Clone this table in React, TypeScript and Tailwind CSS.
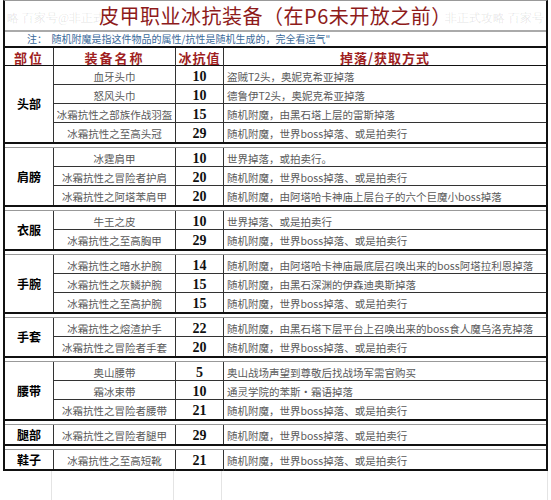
type Row = [string, string, string];
type Group = { part: string; rows: Row[] };

const groups: Group[] = [
  {
    part: "头部",
    rows: [
      ["血牙头巾", "10", "盗贼T2头，奥妮克希亚掉落"],
      ["怒风头巾", "10", "德鲁伊T2头，奥妮克希亚掉落"],
      ["冰霜抗性之部族作战羽盔", "15", "随机附魔，由黑石塔上层的雷斯掉落"],
      ["冰霜抗性之至高头冠", "29", "随机附魔，世界boss掉落、或是拍卖行"],
    ],
  },
  {
    part: "肩膀",
    rows: [
      ["冰霆肩甲", "10", "世界掉落，或拍卖行。"],
      ["冰霜抗性之冒险者护肩", "20", "随机附魔，世界boss掉落、或是拍卖行"],
      ["冰霜抗性之阿塔苯肩甲", "20", "随机附魔，由阿塔哈卡神庙上层台子的六个巨魔小boss掉落"],
    ],
  },
  {
    part: "衣服",
    rows: [
      ["牛王之皮", "10", "世界掉落、或是拍卖行"],
      ["冰霜抗性之至高胸甲", "29", "随机附魔，世界boss掉落、或是拍卖行"],
    ],
  },
  {
    part: "手腕",
    rows: [
      ["冰霜抗性之暗水护腕", "14", "随机附魔，由阿塔哈卡神庙最底层召唤出来的boss阿塔拉利恩掉落"],
      ["冰霜抗性之灰鳞护腕", "15", "随机附魔，由黑石深渊的伊森迪奥斯掉落"],
      ["冰霜抗性之至高护腕", "15", "随机附魔，世界boss掉落、或是拍卖行"],
    ],
  },
  {
    part: "手套",
    rows: [
      ["冰霜抗性之熔渣护手", "22", "随机附魔，由黑石塔下层平台上召唤出来的boss食人魔乌洛克掉落"],
      ["冰霜抗性之冒险者手套", "20", "随机附魔，世界boss掉落、或是拍卖行"],
    ],
  },
  {
    part: "腰带",
    rows: [
      ["奥山腰带", "5", "奥山战场声望到尊敬后找战场军需官购买"],
      ["霜冰束带", "10", "通灵学院的苯斯·霜语掉落"],
      ["冰霜抗性之冒险者腰带", "21", "随机附魔，世界boss掉落、或是拍卖行"],
    ],
  },
  { part: "腿部", rows: [["冰霜抗性之冒险者腿甲", "29", "随机附魔，世界boss掉落、或是拍卖行"]] },
  { part: "鞋子", rows: [["冰霜抗性之至高短靴", "21", "随机附魔，世界boss掉落、或是拍卖行"]] },
];

function GroupBlock({ group }: { group: Group }) {
  return (
    <div className="flex">
      <div className="w-[49px] shrink-0 flex items-center justify-center border-r border-[#333] text-[12px] font-bold text-black">
        {group.part}
      </div>
      <div className="flex-1 flex flex-col">
        {group.rows.map((r, i) => (
          <div
            key={r[0]}
            className={
              "grid grid-cols-[122px_48px_1fr] h-[19px] text-[10.5px] text-[#5a5a5a] " +
              (i < group.rows.length - 1 ? "border-b border-[#333]" : "")
            }
          >
            <div className="flex items-center justify-center border-r border-[#333] whitespace-nowrap">{r[0]}</div>
            <div className="flex items-center justify-center border-r border-[#333] text-[14px] font-bold text-[#111] font-['Liberation_Serif',serif]">
              {r[1]}
            </div>
            <div className="flex items-center pl-[3px] whitespace-nowrap overflow-hidden">{r[2]}</div>
          </div>
        ))}
      </div>
    </div>
  );
}

function Separator() {
  return <div className="h-[6px] border-t-2 border-[#111] border-b border-b-[#999] bg-white" />;
}

export default function App() {
  return (
    <div className="relative w-[551px] h-[500px] overflow-hidden bg-white font-['Noto_Sans_CJK_SC',sans-serif]">
      <div className="ml-[3px] w-[545px] border-x-2 border-[#111] border-b-2 border-t border-t-[#999] flex flex-col">
        {/* title */}
        <div className="relative h-[31px] flex items-center justify-center border-b-2 border-[#aaa]">
          <span className="absolute left-[2px] top-[8px] text-[12px] text-black/10 font-['Liberation_Serif',serif] whitespace-nowrap">
            略 百家号@非正式
          </span>
          <span className="text-[20px] text-[#8e1b1b] tracking-[0.5px]">皮甲职业冰抗装备（在P6未开放之前）</span>
          <span className="absolute right-[2px] top-[8px] text-[12px] text-black/10 font-['Liberation_Serif',serif] whitespace-nowrap">
            非正式攻略 百家号
          </span>
        </div>
        {/* note */}
        <div className="h-[14px] flex items-center pl-[22px] text-[10px] text-[#3a6a9a] leading-none">
          注：&nbsp;&nbsp;随机附魔是指这件物品的属性/抗性是随机生成的，完全看运气"
        </div>
        {/* header */}
        <div className="grid grid-cols-[49px_122px_48px_1fr] h-[20px] border-t-2 border-b border-[#111] text-[13px] font-bold text-[#a01f1f] tracking-[2px]">
          <div className="flex items-center justify-center border-r border-[#333]">部位</div>
          <div className="flex items-center justify-center border-r border-[#333]">装备名称</div>
          <div className="flex items-center justify-center border-r border-[#333] tracking-[1px]">冰抗值</div>
          <div className="flex items-center justify-center tracking-[1px]">掉落/获取方式</div>
        </div>
        {groups.map((g, i) => (
          <div key={g.part}>
            {i > 0 && <Separator />}
            <GroupBlock group={g} />
          </div>
        ))}
      </div>
      {/* empty sheet below */}
      <div className="ml-[3px] w-[545px] h-[40px] grid grid-cols-[49px_122px_48px_1fr]">
        <div className="border-r border-[#e4e4e4]" />
        <div className="border-r border-[#e4e4e4]" />
        <div className="border-r border-[#e4e4e4]" />
        <div className="border-r border-[#e4e4e4]" />
      </div>
    </div>
  );
}
